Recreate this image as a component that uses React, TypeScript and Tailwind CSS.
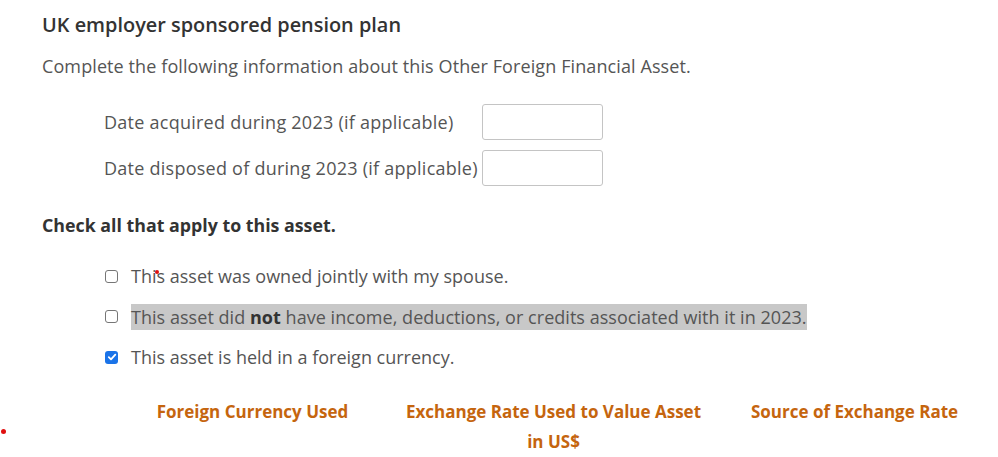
import React from "react";

const font = { fontFamily: "'Open Sans', 'Noto Sans', sans-serif" };

function Box({ checked }: { checked?: boolean }) {
  if (checked) {
    return (
      <span className="flex h-[13px] w-[13px] shrink-0 items-center justify-center rounded-[3px] bg-[#1a73e8]">
        <svg width="10" height="10" viewBox="0 0 10 10">
          <path d="M1.8 5.2 L4 7.4 L8.3 2.6" fill="none" stroke="white" strokeWidth="1.8" strokeLinecap="round" strokeLinejoin="round" />
        </svg>
      </span>
    );
  }
  return <span className="h-[13px] w-[13px] shrink-0 rounded-[3px] border border-[#767676] bg-white" />;
}

export default function App() {
  return (
    <div className="relative h-[457px] w-[998px] overflow-hidden bg-white text-[#3b3b3b]" style={font}>
      <div className="flex flex-col pl-[42px] pt-[12px] tracking-[0.1px]">
        <h1 className="text-[19.9px] font-semibold leading-[26px] tracking-normal text-[#333]">UK employer sponsored pension plan</h1>
        <p className="mt-[15px] text-[18px] leading-[26px] text-[#555]">
          Complete the following information about this Other Foreign Financial Asset.
        </p>
        <div className="ml-[62px] mt-[25px] flex flex-col gap-[10px]">
          <div className="flex items-center">
            <span className="w-[378px] text-[18px] tracking-[0.25px] text-[#555]">Date acquired during 2023 (if applicable)</span>
            <div className="h-[36px] w-[121px] rounded-[3px] border border-[#c4c4c4] bg-white" />
          </div>
          <div className="flex items-center">
            <span className="w-[378px] text-[18px] tracking-[0.25px] text-[#555]">Date disposed of during 2023 (if applicable)</span>
            <div className="h-[36px] w-[121px] rounded-[3px] border border-[#c4c4c4] bg-white" />
          </div>
        </div>
        <h2 className="mt-[26px] text-[17.8px] font-bold leading-[26px] tracking-normal text-[#333]">Check all that apply to this asset.</h2>
        <div className="ml-[63px] mt-[25px] flex flex-col gap-[14.5px]">
          <div className="flex items-center gap-[13px]">
            <Box />
            <span className="text-[18px] leading-[26px] tracking-normal text-[#555]">This asset was owned jointly with my spouse.</span>
          </div>
          <div className="flex items-center gap-[13px]">
            <Box />
            <span className="bg-[#c8c8c8] text-[18px] leading-[26px] tracking-[0.04px] text-[#555]">
              This asset did <b className="text-[#333]">not</b> have income, deductions, or credits associated with it in 2023.
            </span>
          </div>
          <div className="flex items-center gap-[13px]">
            <Box checked />
            <span className="text-[18px] leading-[26px] tracking-normal text-[#555]">This asset is held in a foreign currency.</span>
          </div>
        </div>
        <div className="ml-[60px] mt-[27px] grid w-[903px] grid-cols-3 text-center text-[17px] font-bold leading-[30px] tracking-normal text-[#c5650e]">
          <div>Foreign Currency Used</div>
          <div>Exchange Rate Used to Value Asset<br />in US$</div>
          <div>Source of Exchange Rate</div>
        </div>
      </div>
      <span className="absolute left-[155px] top-[270px] h-[4px] w-[4px] rounded-full bg-[#e01010]" />
      <span className="absolute left-[1px] top-[429px] h-[5px] w-[5px] rounded-full bg-[#e01010]" />
    </div>
  );
}
